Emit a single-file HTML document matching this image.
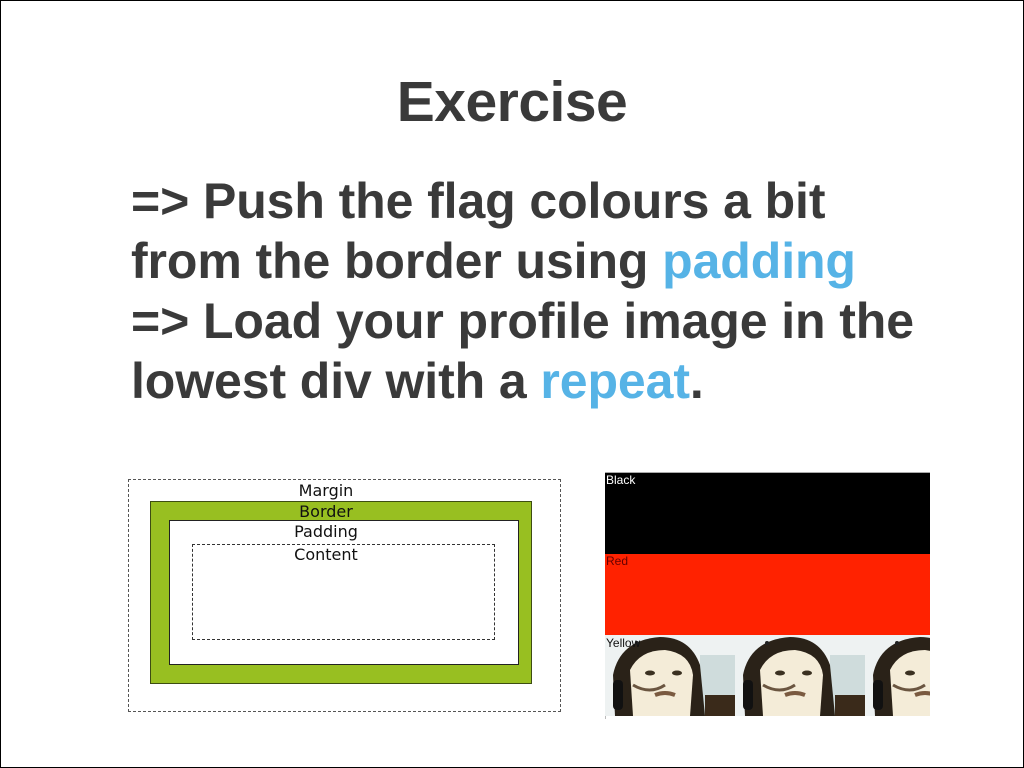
<!DOCTYPE html>
<html><head><meta charset="utf-8"><style>
html,body{margin:0;padding:0}
body{width:1024px;height:768px;position:relative;background:#fff;overflow:hidden;font-family:"Liberation Sans",Arial,sans-serif}
.frame{position:absolute;left:0;top:0;width:1022px;height:766px;border:1px solid #000}
.title{position:absolute;left:0;width:1024px;top:69px;text-align:center;font-weight:bold;font-size:57px;color:#3a3a3a;letter-spacing:-0.5px}
.body{position:absolute;left:131px;top:171px;font-weight:bold;font-size:50px;line-height:60px;color:#3a3a3a;letter-spacing:-0.1px;white-space:nowrap}
.b{color:#56b3e6}
.lbl{position:absolute;font-family:"DejaVu Sans",sans-serif;font-size:16px;color:#111;width:120px;text-align:center}
</style></head><body>
<div class="frame"></div>
<div class="title">Exercise</div>
<div class="body">=&gt; Push the flag colours a bit<br>from the border using <span class="b">padding</span><br>=&gt; Load your profile image in the<br>lowest div with a <span class="b">repeat</span>.</div>

<div style="position:absolute;left:128px;top:479px;width:433px;height:233px;border:1px dashed #555;box-sizing:border-box"></div>
<div style="position:absolute;left:150px;top:501px;width:382px;height:183px;background:#98bf21;border:1px solid #3d4d12;box-sizing:border-box"></div>
<div style="position:absolute;left:169px;top:520px;width:350px;height:145px;background:#fff;border:1px solid #222;box-sizing:border-box"></div>
<div style="position:absolute;left:192px;top:544px;width:303px;height:96px;border:1px dashed #333;box-sizing:border-box"></div>
<div class="lbl" style="left:266px;top:481px">Margin</div>
<div class="lbl" style="left:266px;top:502px">Border</div>
<div class="lbl" style="left:266px;top:522px">Padding</div>
<div class="lbl" style="left:266px;top:545px">Content</div>

<div style="position:absolute;left:605px;top:472px;width:325px;height:1px;background:#aaa"></div>
<div style="position:absolute;left:605px;top:473px;width:1px;height:246px;background:#bbb"></div>
<div style="position:absolute;left:605px;top:473px;width:325px;height:81px;background:#000"></div>
<div style="position:absolute;left:605px;top:554px;width:325px;height:81px;background:#ff2200"></div>
<svg style="position:absolute;left:605px;top:635px" width="325" height="81" viewBox="0 0 325 81">
<defs><pattern id="p" width="130" height="81" patternUnits="userSpaceOnUse">
<rect width="130" height="81" fill="#eef2f2"/>
<rect x="95" y="20" width="35" height="61" fill="#cfdcdc"/>
<rect x="100" y="60" width="30" height="21" fill="#3a2a1a"/>
<path d="M10 81 L8 40 Q15 5 55 2 Q85 2 95 30 L100 81 Z" fill="#2a2218"/>
<path d="M28 81 L25 35 Q35 15 60 15 Q85 18 88 40 L85 81 Z" fill="#f4ecd8"/>
<path d="M28 50 Q45 60 60 50" fill="none" stroke="#6a5540" stroke-width="3"/>
<ellipse cx="45" cy="38" rx="5" ry="2.5" fill="#3a3020"/><ellipse cx="72" cy="38" rx="5" ry="2.5" fill="#3a3020"/>
<path d="M50 60 Q60 56 70 60" fill="none" stroke="#7a5a40" stroke-width="4"/>
<rect x="8" y="45" width="10" height="30" rx="4" fill="#111"/>
<circle cx="32" cy="8" r="2" fill="#222"/>
</pattern></defs>
<rect width="325" height="81" fill="url(#p)"/>
<text x="1" y="12" font-family="Liberation Sans,sans-serif" font-size="12" fill="#111">Yellow</text>
</svg>
<div style="position:absolute;left:606px;top:473px;font-size:12px;color:#fff">Black</div>
<div style="position:absolute;left:606px;top:554px;font-size:12px;color:#600">Red</div>
</body></html>
